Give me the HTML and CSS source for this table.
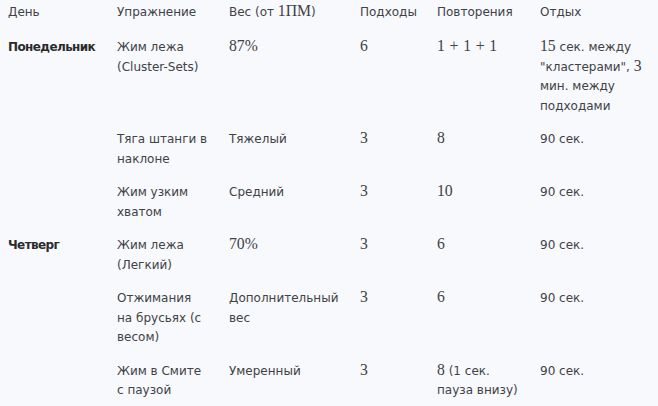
FILE: index.html
```html
<!DOCTYPE html>
<html lang="ru">
<head>
<meta charset="utf-8">
<link rel="stylesheet" href="styles.css">
</head>
<body>
<table class="plan">
  <colgroup>
    <col class="c-day"><col class="c-ex"><col class="c-w"><col class="c-sets"><col class="c-reps"><col class="c-rest">
  </colgroup>
  <thead>
    <tr>
      <th>День</th>
      <th>Упражнение</th>
      <th>Вес (от <span class="m">1ПМ</span>)</th>
      <th>Подходы</th>
      <th>Повторения</th>
      <th>Отдых</th>
    </tr>
  </thead>
  <tbody>
    <tr>
      <td class="day">Понедельник</td>
      <td class="ex">Жим лежа (Cluster-Sets)</td>
      <td><span class="m">87%</span></td>
      <td><span class="m">6</span></td>
      <td><span class="m">1<span class="op">+</span>1<span class="op">+</span>1</span></td>
      <td class="rest"><span class="m">15</span> сек. между "кластерами", <span class="m">3</span> мин. между подходами</td>
    </tr>
    <tr>
      <td></td>
      <td class="ex">Тяга штанги в наклоне</td>
      <td>Тяжелый</td>
      <td><span class="m">3</span></td>
      <td><span class="m">8</span></td>
      <td class="rest">90 сек.</td>
    </tr>
    <tr>
      <td></td>
      <td class="ex">Жим узким хватом</td>
      <td>Средний</td>
      <td><span class="m">3</span></td>
      <td><span class="m">10</span></td>
      <td class="rest">90 сек.</td>
    </tr>
    <tr>
      <td class="day">Четверг</td>
      <td class="ex">Жим лежа (Легкий)</td>
      <td><span class="m">70%</span></td>
      <td><span class="m">3</span></td>
      <td><span class="m">6</span></td>
      <td class="rest">90 сек.</td>
    </tr>
    <tr>
      <td></td>
      <td class="ex">Отжимания на брусьях (с весом)</td>
      <td>Дополнительный вес</td>
      <td><span class="m">3</span></td>
      <td><span class="m">6</span></td>
      <td class="rest">90 сек.</td>
    </tr>
    <tr>
      <td></td>
      <td class="ex">Жим в Смите с паузой</td>
      <td>Умеренный</td>
      <td><span class="m">3</span></td>
      <td><span class="m">8</span> (1 сек. пауза внизу)</td>
      <td class="rest">90 сек.</td>
    </tr>
  </tbody>
</table>
</body>
</html>
```
FILE: styles.css
```css
html, body {
  margin: 0;
  background: #f8f9fc;
}
body {
  padding: 0 0 0 8px;
  font-family: "DejaVu Sans", sans-serif;
  font-size: 12px;
  color: #404246;
}
.plan {
  border-collapse: collapse;
  table-layout: fixed;
  width: 650px;
}
.c-day { width: 109px; }
.c-ex { width: 112px; }
.c-w { width: 131px; }
.c-sets { width: 77px; }
.c-reps { width: 103px; }
.c-rest { width: 118px; }
.plan th, .plan td {
  text-align: left;
  vertical-align: top;
  padding: 7px 12px 7px 0;
  line-height: 19.5px;
  font-weight: 400;
}
.plan th {
  padding-top: 3px;
  padding-bottom: 8.5px;
}
.plan td.ex {
  padding-right: 19px;
}
.plan td.rest {
  padding-right: 0;
}
.plan td.day {
  font-weight: 700;
  letter-spacing: -0.6px;
  color: #2a2b2d;
}
.m {
  font-family: "Liberation Serif", "DejaVu Serif", serif;
  font-size: 1.31em;
  line-height: 1;
}
.op {
  margin: 0 0.3em;
}
```
